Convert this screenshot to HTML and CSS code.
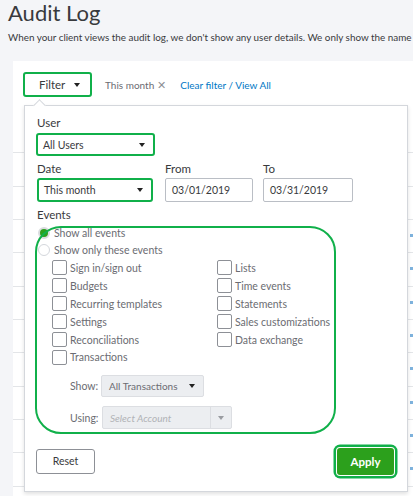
FILE: index.html
```html
<!DOCTYPE html>
<html lang="en">
<head>
<meta charset="UTF-8">
<meta name="viewport" content="width=device-width, initial-scale=1.0">
<title>Audit Log</title>
<link rel="stylesheet" href="styles.css">
</head>
<body>
    <div class="page-header">
        <div class="page-title">Audit Log</div>
        <div class="page-note">When your client views the audit log, we don't show any user details. We only show the name</div>
    </div>
    <div class="card">
        <div class="filter-bar">
            <div class="filter-btn">Filter <span class="caret"></span></div>
            <div class="filter-chip">This month <span class="chip-x">&#x2715;</span></div>
            <div class="filter-link">Clear filter / View All</div>
        </div>
        <div class="log-table">
            <div class="log-row"><div class="cell"></div><div class="cell"></div><div class="cell"></div><div class="cell link"></div></div>
            <div class="log-row"><div class="cell"></div><div class="cell"></div><div class="cell"></div><div class="cell link"></div></div>
            <div class="log-row"><div class="cell"></div><div class="cell"></div><div class="cell"></div><div class="cell link"></div></div>
            <div class="log-row"><div class="cell"></div><div class="cell"></div><div class="cell"></div><div class="cell link"><span class="link-mark"></span></div></div>
            <div class="log-row"><div class="cell"></div><div class="cell"></div><div class="cell"></div><div class="cell link"><span class="link-mark"></span></div></div>
            <div class="log-row"><div class="cell"></div><div class="cell"></div><div class="cell"></div><div class="cell link"><span class="link-mark"></span></div></div>
            <div class="log-row"><div class="cell"></div><div class="cell"></div><div class="cell"></div><div class="cell link"><span class="link-mark"></span></div></div>
            <div class="log-row"><div class="cell"></div><div class="cell"></div><div class="cell"></div><div class="cell link"><span class="link-mark"></span></div></div>
            <div class="log-row"><div class="cell"></div><div class="cell"></div><div class="cell"></div><div class="cell link"><span class="link-mark"></span></div></div>
            <div class="log-row"><div class="cell"></div><div class="cell"></div><div class="cell"></div><div class="cell link"><span class="link-mark"></span></div></div>
            <div class="log-row"><div class="cell"></div><div class="cell"></div><div class="cell"></div><div class="cell link"><span class="link-mark"></span></div></div>
        </div>

        <div class="filter-panel">
            <div class="field-label">User</div>
            <div class="select-box hl user-select">All Users <span class="caret"></span></div>

            <div class="date-grid">
                <div class="field-label">Date</div>
                <div class="field-label">From</div>
                <div class="field-label">To</div>
                <div class="select-box hl">This month <span class="caret"></span></div>
                <div class="text-input">03/01/2019</div>
                <div class="text-input">03/31/2019</div>
            </div>

            <div class="field-label">Events</div>
            <div class="events">
                <div class="radio-row"><span class="radio on"></span>Show all events</div>
                <div class="radio-row"><span class="radio"></span>Show only these events</div>
                <div class="check-grid">
                    <div class="check-row"><span class="box"></span>Sign in/sign out</div>
                    <div class="check-row"><span class="box"></span>Lists</div>
                    <div class="check-row"><span class="box"></span>Budgets</div>
                    <div class="check-row"><span class="box"></span>Time events</div>
                    <div class="check-row"><span class="box"></span>Recurring templates</div>
                    <div class="check-row"><span class="box"></span>Statements</div>
                    <div class="check-row"><span class="box"></span>Settings</div>
                    <div class="check-row"><span class="box"></span>Sales customizations</div>
                    <div class="check-row"><span class="box"></span>Reconciliations</div>
                    <div class="check-row"><span class="box"></span>Data exchange</div>
                    <div class="check-row"><span class="box"></span>Transactions</div>
                </div>
                <div class="sub-row">
                    <div class="sub-label">Show:</div>
                    <div class="gray-select show-select">All Transactions <span class="caret"></span></div>
                </div>
                <div class="sub-row">
                    <div class="sub-label">Using:</div>
                    <div class="gray-select using-select"><span class="placeholder">Select Account</span><span class="split"><span class="caret light"></span></span></div>
                </div>
            </div>

            <div class="panel-footer">
                <div class="btn-reset">Reset</div>
                <div class="btn-apply">Apply</div>
            </div>
        </div>
    </div>
</body>
</html>
```

FILE: styles.css
```css
body {
    margin: 0;
    width: 413px;
    height: 496px;
    overflow: hidden;
    background-color: #f4f5f8;
    color: #393a3d;
    font-family: Lato, "Open Sans", sans-serif;
}
.page-header {
    padding: 0 0 0 8px;
    height: 61px;
    white-space: nowrap;
}
.page-title {
    font-size: 22px;
    line-height: 26px;
}
.page-note {
    font-size: 9.9px;
    margin-top: 5px;
}
.card {
    position: relative;
    margin-left: 13px;
    background-color: #fff;
    height: 500px;
}
.filter-bar {
    display: flex;
    align-items: center;
    padding: 11px 0 0 10px;
    height: 25px;
}
.filter-btn {
    box-sizing: border-box;
    width: 69px;
    height: 25px;
    border: 2.5px solid #10b04a;
    border-radius: 3px;
    display: flex;
    align-items: center;
    padding-left: 14px;
    font-size: 11.5px;
    gap: 9px;
}
.caret {
    display: inline-block;
    width: 0;
    height: 0;
    border-left: 3.5px solid transparent;
    border-right: 3.5px solid transparent;
    border-top: 4px solid #222;
}
.caret.light {
    border-top-color: #9a9ca1;
}
.filter-chip {
    margin-left: 13px;
    font-size: 10px;
    color: #6b6c72;
    display: flex;
    align-items: center;
    gap: 3px;
}
.chip-x {
    font-size: 11px;
    color: #8d9096;
}
.filter-link {
    margin-left: 14px;
    font-size: 10px;
    color: #0077c5;
}

/* table that sits under the dropdown */
.log-table {
    margin-top: 23px;
}
.log-row {
    box-sizing: border-box;
    height: 33.33px;
    border-bottom: 1px solid #e3e5e8;
    display: grid;
    grid-template-columns: 147px 115px 135px 60px;
}
.cell {
    border-left: 1px solid #e3e5e8;
}
.cell:first-child {
    border-left: none;
}
.cell.link {
    border-left: none;
    padding-top: 14px;
}
.link-mark {
    display: block;
    width: 5px;
    height: 3px;
    background-color: #7fb3dd;
}

/* filter dropdown */
.filter-panel {
    position: absolute;
    left: 11px;
    top: 44px;
    width: 384px;
    height: 387px;
    box-sizing: border-box;
    background-color: #fff;
    border: 1px solid #d4d7dc;
    box-shadow: 0 2px 4px rgba(0, 0, 0, .12);
    padding: 9px 12px 0 12px;
}
.filter-panel:before {
    content: "";
    position: absolute;
    left: 10px;
    top: -5px;
    width: 8px;
    height: 8px;
    background-color: #fff;
    border-left: 1px solid #d4d7dc;
    border-top: 1px solid #d4d7dc;
    transform: rotate(45deg);
}
.field-label {
    font-size: 11.5px;
    line-height: 16px;
}
.select-box {
    box-sizing: border-box;
    height: 23px;
    border: 1px solid #babec5;
    border-radius: 2px;
    display: flex;
    align-items: center;
    justify-content: space-between;
    padding: 0 8px 0 5px;
    font-size: 10.5px;
}
.select-box.hl {
    border: 2.5px solid #10b04a;
    border-radius: 3px;
}
.user-select {
    width: 119px;
    margin-top: 2px;
    margin-left: -1px;
}
.date-grid {
    display: grid;
    grid-template-columns: 116px 88px 88px;
    column-gap: 12px;
    row-gap: 1px;
    margin-top: 5px;
}
.date-grid .select-box {
    height: 24px;
}
.text-input {
    box-sizing: border-box;
    height: 24px;
    border: 1px solid #babec5;
    border-radius: 2px;
    padding-left: 6px;
    font-size: 10.5px;
    line-height: 22px;
}
.date-grid .text-input:last-child {
    margin-left: -2px;
}
.date-grid .field-label:nth-child(3) {
    margin-left: -2px;
}
.date-grid + .field-label {
    margin-top: 5px;
}

/* event choices, ringed in green */
.events {
    position: relative;
    font-size: 10.5px;
    color: #6b6c72;
    padding-top: 1px;
}
.events:after {
    content: "";
    position: absolute;
    left: -2px;
    top: 3px;
    width: 301px;
    bottom: -5px;
    border: 2.5px solid #10b04a;
    border-radius: 26px;
    box-sizing: border-box;
    pointer-events: none;
}
.radio-row {
    height: 17px;
    display: flex;
    align-items: center;
    gap: 4px;
    margin-left: 1px;
}
.radio {
    box-sizing: border-box;
    width: 12px;
    height: 12px;
    border-radius: 50%;
    border: 1px solid #d4d7dc;
}
.radio.on {
    background-color: #2ca01c;
    border: 2px solid #d9dbde;
}
.check-grid {
    display: grid;
    grid-template-columns: 165px 150px;
    padding-left: 15px;
    margin-top: 1px;
}
.check-row {
    height: 17.9px;
    display: flex;
    align-items: center;
    gap: 3px;
}
.box {
    box-sizing: border-box;
    width: 15px;
    height: 15px;
    border: 1px solid #8d9096;
    border-radius: 2px;
}
.sub-row {
    display: flex;
    align-items: center;
    margin-top: 9px;
    padding-left: 33px;
}
.sub-label {
    width: 31px;
    font-size: 10.5px;
}
.gray-select {
    box-sizing: border-box;
    height: 22px;
    background-color: #eceef1;
    border: 1px solid #dcdee2;
    border-radius: 2px;
    display: flex;
    align-items: center;
    justify-content: space-between;
    font-size: 10px;
}
.show-select {
    width: 103px;
    padding: 0 8px 0 7px;
}
.using-select {
    width: 130px;
    height: 23px;
    margin-left: 1px;
    padding-left: 7px;
}
.placeholder {
    font-style: italic;
    color: #b0b2b6;
}
.split {
    align-self: stretch;
    width: 20px;
    border-left: 1px solid #dcdee2;
    display: flex;
    align-items: center;
    justify-content: center;
}
.panel-footer {
    display: flex;
    justify-content: space-between;
    align-items: center;
    margin-top: 19px;
    margin-left: -1px;
}
.btn-reset {
    box-sizing: border-box;
    width: 59px;
    height: 25px;
    border: 1px solid #8d9096;
    border-radius: 3px;
    font-size: 10.5px;
    text-align: center;
    line-height: 23px;
}
.btn-apply {
    width: 57px;
    height: 27px;
    background-color: #2ca01c;
    color: #fff;
    font-weight: bold;
    font-size: 11.5px;
    text-align: center;
    line-height: 27px;
    border-radius: 3px;
    box-shadow: 0 0 0 1px #fff, 0 0 0 3.5px #10b04a;
    margin-right: 1px;
}
```
